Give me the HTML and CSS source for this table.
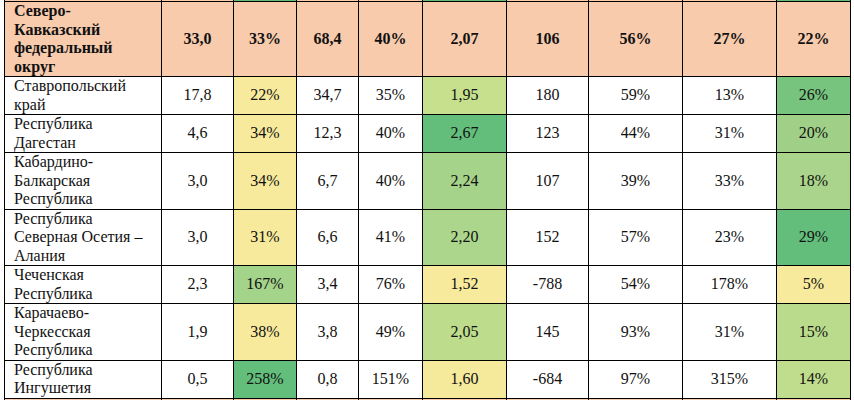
FILE: index.html
```html
<!DOCTYPE html>
<html lang="ru">
<head>
<meta charset="utf-8">
<title>СКФО</title>
<link rel="stylesheet" href="styles.css">
</head>
<body class="page">
<table class="grid">
  <colgroup>
    <col class="c1"><col class="c2"><col class="c3"><col class="c4"><col class="c5">
    <col class="c6"><col class="c7"><col class="c8"><col class="c9"><col class="c10">
  </colgroup>
  <tr class="stub">
    <td class="peach"></td><td class="peach"></td><td class="g1"></td><td class="peach"></td><td class="peach"></td>
    <td class="g1"></td><td class="peach"></td><td class="peach"></td><td class="peach"></td><td class="g1"></td>
  </tr>
  <tr class="head">
    <td class="name">Северо-Кавказский федеральный округ</td>
    <td>33,0</td><td>33%</td><td>68,4</td><td>40%</td><td>2,07</td><td>106</td><td>56%</td><td>27%</td><td>22%</td>
  </tr>
  <tr>
    <td class="name">Ставропольский край</td>
    <td>17,8</td><td class="y">22%</td><td>34,7</td><td>35%</td><td class="g-195">1,95</td><td>180</td><td>59%</td><td>13%</td><td class="g-26">26%</td>
  </tr>
  <tr>
    <td class="name">Республика Дагестан</td>
    <td>4,6</td><td class="y">34%</td><td>12,3</td><td>40%</td><td class="g1">2,67</td><td>123</td><td>44%</td><td>31%</td><td class="g-20">20%</td>
  </tr>
  <tr>
    <td class="name">Кабардино-Балкарская Республика</td>
    <td>3,0</td><td class="y">34%</td><td>6,7</td><td>40%</td><td class="g-224">2,24</td><td>107</td><td>39%</td><td>33%</td><td class="g-18">18%</td>
  </tr>
  <tr>
    <td class="name">Республика Северная Осетия – Алания</td>
    <td>3,0</td><td class="y">31%</td><td>6,6</td><td>41%</td><td class="g-220">2,20</td><td>152</td><td>57%</td><td>23%</td><td class="g1">29%</td>
  </tr>
  <tr>
    <td class="name">Чеченская Республика</td>
    <td>2,3</td><td class="g-167">167%</td><td>3,4</td><td>76%</td><td class="y">1,52</td><td>-788</td><td>54%</td><td>178%</td><td class="y">5%</td>
  </tr>
  <tr>
    <td class="name">Карачаево-Черкесская Республика</td>
    <td>1,9</td><td class="y">38%</td><td>3,8</td><td>49%</td><td class="g-205">2,05</td><td>145</td><td>93%</td><td>31%</td><td class="g-15">15%</td>
  </tr>
  <tr>
    <td class="name">Республика Ингушетия</td>
    <td>0,5</td><td class="g1">258%</td><td>0,8</td><td>151%</td><td class="y2">1,60</td><td>-684</td><td>97%</td><td>315%</td><td class="g-14">14%</td>
  </tr>
  <tr class="stub">
    <td class="peach"></td><td class="peach"></td><td class="peach"></td><td class="peach"></td><td class="peach"></td>
    <td class="peach"></td><td class="peach"></td><td class="peach"></td><td class="peach"></td><td class="peach"></td>
  </tr>
</table>
</body>
</html>
```
FILE: styles.css
```css
html, body {
  margin: 0;
  padding: 0;
  background: #ffffff;
  overflow: hidden;
}

.page {
  font-family: "Liberation Serif", "Times New Roman", "DejaVu Serif", serif;
}

.grid {
  margin: 0 0 0 4px;
  border-collapse: collapse;
  table-layout: fixed;
  width: 846px;
  font-size: 16px;
  line-height: 18.5px;
  color: #111111;
}

.c1 { width: 157px; }
.c2 { width: 72px; }
.c3 { width: 63px; }
.c4 { width: 62px; }
.c5 { width: 64px; }
.c6 { width: 84px; }
.c7 { width: 82px; }
.c8 { width: 94px; }
.c9 { width: 94px; }
.c10 { width: 74px; }

.grid td {
  font-family: "Liberation Serif", "Times New Roman", "DejaVu Serif", serif;
  border: 1px solid #000000;
  padding: 0;
  text-align: center;
  vertical-align: middle;
}

.grid td.name {
  text-align: left;
  padding: 0 8px 0 9px;
}

.stub td {
  height: 1px;
  line-height: 0;
  font-size: 0;
  border-top: none;
}

.head td {
  background: #f8cbad;
  font-weight: bold;
}

.peach { background: #f8cbad; }
.y { background: #f8ea9c; }
.y2 { background: #f5e99b; }
.g1 { background: #63be7b; }
.g-195 { background: #c6e08e; }
.g-224 { background: #a6d38a; }
.g-220 { background: #abd68b; }
.g-205 { background: #bddc8c; }
.g-167 { background: #a4d38a; }
.g-26 { background: #77c47e; }
.g-20 { background: #a0d088; }
.g-18 { background: #aad48b; }
.g-15 { background: #bbdb8c; }
.g-14 { background: #c0dd8d; }
```
